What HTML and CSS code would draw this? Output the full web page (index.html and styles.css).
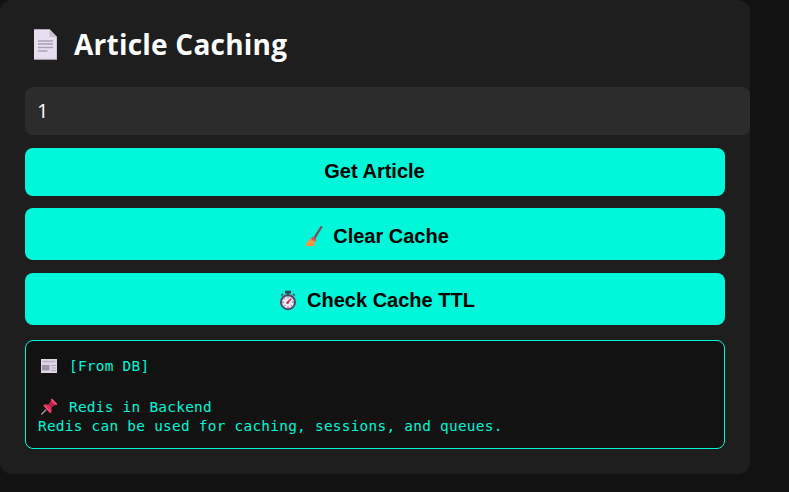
FILE: index.html
```html
<!DOCTYPE html>
<html lang="en">
<head>
<meta charset="utf-8">
<title>Article Caching</title>
<link rel="stylesheet" href="styles.css">
</head>
<body>
<main class="card">
  <h2 class="title">
    <svg class="title-icon" width="24" height="31" viewBox="0 0 24 31">
      <path d="M0 .5h16l7 7.500V30.500H0z" fill="#e7dff0"/>
      <path d="M0 .3h16v.8H0zM22.300 8h.7v22.500H0v-.8h22.300z" fill="#c3b8cf"/>
      <path d="M15.500.5l7.500 7.500h-7.500z" fill="#c8c0d0"/>
      <path d="M4 12h15M4 15h15M4 18.500h15M4 22h9.500" stroke="#aaa1b3" stroke-width="1.300"/>
    </svg>
    <span class="title-text">Article Caching</span>
  </h2>
  <input class="field" type="text" value="1" aria-label="Article ID">
  <button class="btn btn-get"><span class="get-text">Get Article</span></button>
  <button class="btn">
    <svg class="broom" width="18" height="21" viewBox="0 0 18 21">
      <path d="M16.300 1.200L9.500 11.800" stroke="#76505a" stroke-width="2.300" stroke-linecap="round"/>
      <path d="M7.500 10.800l3.800 2.500-1.200 2.500-4.600-3z" fill="#e34b57"/>
      <path d="M5.600 12.700l4.600 3-1.700 4.500-7.800-.3.800-2.900z" fill="#ff8b3d"/>
      <path d="M2 18.600l3.500-3.200M4.700 19.200l2.700-2.700" stroke="#ffbd55" stroke-width=".9"/>
    </svg>
    <span class="clear-text">Clear Cache</span>
  </button>
  <button class="btn btn-ttl">
    <svg class="watch" width="18" height="21" viewBox="0 0 18 21">
      <path d="M6 .8h6v2.700H6zM8 3h2v2H8z" fill="#443b59"/>
      <path d="M2.200 5.500l2-1.500M15.800 5.500l-2-1.500" stroke="#625672" stroke-width="2"/>
      <circle cx="9" cy="12.200" r="7" fill="#eee7f5" stroke="#544565" stroke-width="2"/>
      <path d="M9 6.500v1.800M9 16.200V18M3.300 12.200h1.800M13 12.200h1.800M5 8.200l1.200 1.200M5 16.200l1.200-1.200M13 16.200L11.800 15" stroke="#75687f" stroke-width="1"/>
      <path d="M8 13.300l4.200-4.700" stroke="#ef2864" stroke-width="1.600"/>
      <circle cx="8.600" cy="12.800" r="1.200" fill="#8a425e"/>
    </svg>
    <span class="ttl-text">Check Cache TTL</span>
  </button>
  <section class="output">
    <div class="line line-source">
      <svg class="line-icon" width="18" height="16" viewBox="0 0 18 16">
        <path d="M1 1h16v14H1z" fill="#dfd5e8"/>
        <path d="M2.500 3.500h13" stroke="#b8aec2" stroke-width="1.400"/>
        <path d="M2 7h7.500v5.500H2z" fill="#9e94a8"/>
        <path d="M11 7.500h5M11 10h5M11 12.500h5" stroke="#b0a5ba"/>
      </svg>
      <span>[From DB]</span>
    </div>
    <div class="line line-heading">
      <svg class="line-icon" width="18" height="18" viewBox="0 0 18 18">
        <path d="M1.300 16.500l5-5" stroke="#9a8fa5" stroke-width="1.500"/>
        <path d="M3.200 7.200c2-1.400 3.800-1 5-.4l2.700-3.200c-.3-1.500 0-2.200 1-2.800l5.200 5.500c-1 1-2 1.100-3 .7l-2.900 3c.9 2 .7 3.800-.9 5.500z" fill="#e72b5c"/>
        <path d="M11.500 1l5.300 5.500M4 7.400l6.500 7" stroke="#fb5278" stroke-width="1.200"/>
        <path d="M11 4.300l2.700 2.800-2.600 2.600-2.700-2.800z" fill="#ad2449"/>
      </svg>
      <span>Redis in Backend</span>
    </div>
    <div class="line">Redis can be used for caching, sessions, and queues.</div>
  </section>
</main>
</body>
</html>
```

FILE: styles.css
```css
* {
  box-sizing: border-box;
}

body {
  margin: 0;
  background: #121212;
  color: #fff;
  font-family: "Open Sans", "Noto Sans", sans-serif;
}

.card {
  width: 750px;
  height: 474px;
  padding: 25px;
  background: #1e1e1e;
  border-radius: 12px;
}

.title {
  display: flex;
  align-items: center;
  height: 40px;
  margin: 0 0 22px;
  padding-left: 9px;
  font-size: 28px;
  font-weight: 700;
  line-height: 38px;
}

.title-icon {
  flex: none;
  margin-right: 16px;
  margin-top: -2px;
}

.title-text {
  margin-top: -2px;
  white-space: nowrap;
  letter-spacing: 0.23px;
}

.field {
  display: block;
  width: 725px;
  height: 48px;
  margin-bottom: 13px;
  padding: 0 12px 2px;
  border: 0;
  border-radius: 8px;
  background: #2c2c2c;
  color: #fff;
  font: 20px "Open Sans", "Noto Sans", sans-serif;
}

.btn {
  display: flex;
  align-items: center;
  justify-content: center;
  width: 700px;
  height: 52px;
  margin: 0 0 13px;
  padding: 4px 0 0 4px;
  border: 0;
  border-radius: 8px;
  background: #00f7d9;
  color: #000;
  font: bold 20px/24px "Liberation Sans", sans-serif;
}

.btn-get {
  height: 48px;
  margin-bottom: 12px;
  padding: 0 1px 2px 0;
}

.btn-ttl {
  padding-top: 2px;
  margin-bottom: 15px;
}

.broom {
  margin-right: 10px;
}

.watch {
  margin-right: 10px;
}

.output {
  width: 700px;
  height: 109px;
  padding: 16px 12px 0;
  border: 1px solid #00f7d9;
  border-radius: 8px;
  background: #121212;
  color: #00f7d9;
  font-family: "DejaVu Sans Mono", "Liberation Mono", monospace;
  font-size: 14.4px;
  letter-spacing: 0.27px;
}

.line {
  display: flex;
  align-items: center;
  height: 19px;
  line-height: 19px;
  white-space: pre;
}

.line-source {
  margin-bottom: 22px;
}

.line-icon {
  margin: -2px 11px 0 2px;
}
```
